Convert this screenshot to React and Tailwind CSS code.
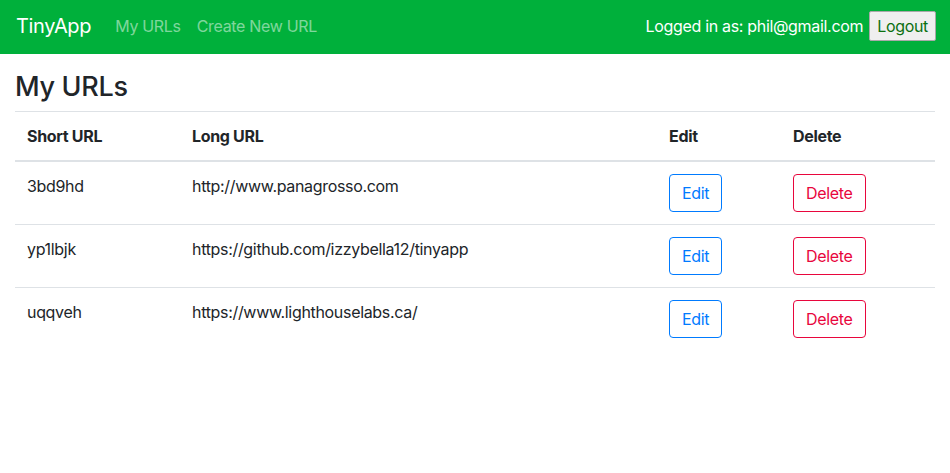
import React from "react";

const urls = [
  { id: "3bd9hd", long: "http://www.panagrosso.com" },
  { id: "yp1lbjk", long: "https://github.com/izzybella12/tinyapp" },
  { id: "uqqveh", long: "https://www.lighthouselabs.ca/" },
];

export default function App() {
  return (
    <div className="min-h-screen bg-white text-[#212529] tracking-[-0.02em] font-['Inter','Liberation_Sans',sans-serif]">
      <nav className="h-[54px] bg-[#00b03b] flex items-center pl-4 pr-[14px] pb-[2px]">
        <a className="text-white text-[20px] mr-6">TinyApp</a>
        <a className="text-white/50 text-[16px] mr-4">My URLs</a>
        <a className="text-white/50 text-[16px]">Create New URL</a>
        <div className="ml-auto flex items-center gap-1">
          <span className="text-white text-[16px]">Logged in as: phil@gmail.com</span>
          <button className="ml-0.5 border border-[#a9a9a9] bg-[#efefef] text-[#0b700f] text-[16px] px-[7px] h-[30px] rounded-[2px]">
            Logout
          </button>
        </div>
      </nav>

      <main className="px-[15px]">
        <h3 className="text-[27px] font-medium leading-[1.2] mt-[16.5px] mb-[8px]">My URLs</h3>
        <table className="w-full text-[16px] border-collapse">
          <thead>
            <tr className="border-t border-[#dee2e6] border-b-2 border-b-[#dee2e6] text-left">
              <th className="p-3 font-bold w-[165px]">Short URL</th>
              <th className="p-3 font-bold w-[477px]">Long URL</th>
              <th className="p-3 font-bold w-[124px]">Edit</th>
              <th className="p-3 font-bold">Delete</th>
            </tr>
          </thead>
          <tbody>
            {urls.map((u) => (
              <tr key={u.id} className="border-t border-[#dee2e6] align-top first:border-t-0">
                <td className="p-3">{u.id}</td>
                <td className="p-3">{u.long}</td>
                <td className="p-3">
                  <button className="h-[38px] px-3 border border-[#007bff] text-[#007bff] rounded-[4px]">
                    Edit
                  </button>
                </td>
                <td className="p-3">
                  <button className="h-[38px] px-3 border border-[#e8063d] text-[#e8063d] rounded-[4px]">
                    Delete
                  </button>
                </td>
              </tr>
            ))}
          </tbody>
        </table>
      </main>
    </div>
  );
}
